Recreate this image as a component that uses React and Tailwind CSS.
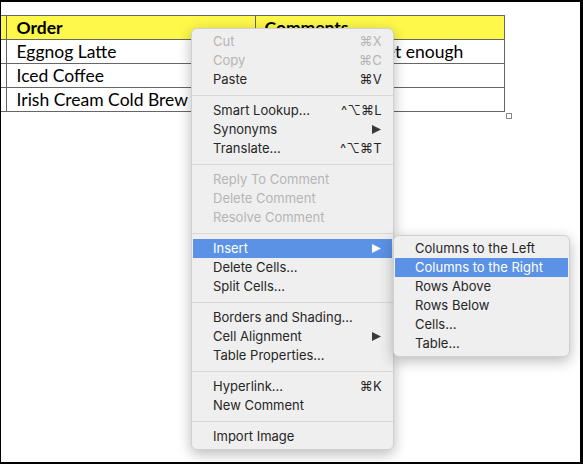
import { Fragment } from 'react';

const menuGroups = [
  [
    { label: 'Cut', shortcut: '⌘X', disabled: true },
    { label: 'Copy', shortcut: '⌘C', disabled: true },
    { label: 'Paste', shortcut: '⌘V' },
  ],
  [
    { label: 'Smart Lookup...', shortcut: '^⌥⌘L' },
    { label: 'Synonyms', submenu: true },
    { label: 'Translate...', shortcut: '^⌥⌘T' },
  ],
  [
    { label: 'Reply To Comment', disabled: true },
    { label: 'Delete Comment', disabled: true },
    { label: 'Resolve Comment', disabled: true },
  ],
  [
    { label: 'Insert', submenu: true, active: true },
    { label: 'Delete Cells...' },
    { label: 'Split Cells...' },
  ],
  [
    { label: 'Borders and Shading...' },
    { label: 'Cell Alignment', submenu: true },
    { label: 'Table Properties...' },
  ],
  [
    { label: 'Hyperlink...', shortcut: '⌘K' },
    { label: 'New Comment' },
  ],
  [{ label: 'Import Image' }],
];

const insertItems = [
  'Columns to the Left',
  'Columns to the Right',
  'Rows Above',
  'Rows Below',
  'Cells...',
  'Table...',
];

const rows = [
  ['Eggnog Latte', 'Not nearly sweet enough'],
  ['Iced Coffee', ''],
  ['Irish Cream Cold Brew', ''],
];

function Arrow({ light }) {
  return (
    <svg width="9" height="9" viewBox="0 0 9 9" className="mr-px">
      <path d="M0 0 L9 4.5 L0 9 Z" fill={light ? '#ffffff' : '#3a3a3a'} />
    </svg>
  );
}

function MenuItem({ item }) {
  const base = 'mx-px flex h-[19px] items-center justify-between pl-5 pr-[10px]';
  const color = item.active
    ? 'bg-[#5b92e6] text-white'
    : item.disabled
      ? 'text-[#b5b5b5]'
      : 'text-[#262626]';
  return (
    <div className={`${base} ${color}`}>
      <span>{item.label}</span>
      {item.shortcut && <span className="tracking-[0.3px]">{item.shortcut}</span>}
      {item.submenu && <Arrow light={item.active} />}
    </div>
  );
}

export default function App() {
  return (
    <div className="relative h-[464px] w-[583px] overflow-hidden border-b-2 border-l border-r-[3px] border-t-2 border-black bg-white">
      {/* document table */}
      <div className="pt-[13px] font-['Lato','Open_Sans',sans-serif] text-[17.5px] text-black">
        <table className="border-collapse">
          <tbody>
            <tr className="h-[24px] bg-[#fdf84a] font-bold">
              <td className="w-[5px] border border-l-0 border-[#666] p-0"></td>
              <td className="w-[249px] border border-[#666] py-0 pl-[10px] leading-none">Order</td>
              <td className="w-[249px] border border-[#666] py-0 pl-[9px] leading-none">Comments</td>
            </tr>
            {rows.map((r) => (
              <tr key={r[0]} className="h-[24px]">
                <td className="border border-l-0 border-[#666] p-0"></td>
                <td className="border border-[#666] py-0 pl-[10px] leading-none">{r[0]}</td>
                <td className="border border-[#666] py-0 pl-[15px] leading-none">{r[1]}</td>
              </tr>
            ))}
          </tbody>
        </table>
        <div className="ml-[505px] mt-[1px] h-[6px] w-[6px] border border-[#888] bg-white"></div>
      </div>

      {/* context menu */}
      <div className="absolute left-[190px] top-[26px] w-[203px] rounded-[6px] border border-[#d0d0d0] bg-[#efefef] py-[3px] font-['Inter','Noto_Sans',sans-serif] text-[13px] leading-none shadow-[0_4px_14px_rgba(0,0,0,0.28)]">
        {menuGroups.map((group, gi) => (
          <Fragment key={gi}>
            {gi > 0 && (
              <div className="flex h-[12px] items-center">
                <div className="h-px w-full bg-[#d8d8d8]"></div>
              </div>
            )}
            {group.map((item) => (
              <MenuItem key={item.label} item={item} />
            ))}
          </Fragment>
        ))}
      </div>

      {/* insert submenu */}
      <div className="absolute left-[392px] top-[233px] w-[177px] rounded-[6px] border border-[#d0d0d0] bg-[#efefef] py-[3px] font-['Inter','Noto_Sans',sans-serif] text-[13px] leading-none text-[#262626] shadow-[0_4px_14px_rgba(0,0,0,0.28)]">
        {insertItems.map((label, i) => (
          <div
            key={label}
            className={`mx-px flex h-[19px] items-center pl-5 ${i === 1 ? 'bg-[#5b92e6] text-white' : ''}`}
          >
            {label}
          </div>
        ))}
      </div>
    </div>
  );
}
